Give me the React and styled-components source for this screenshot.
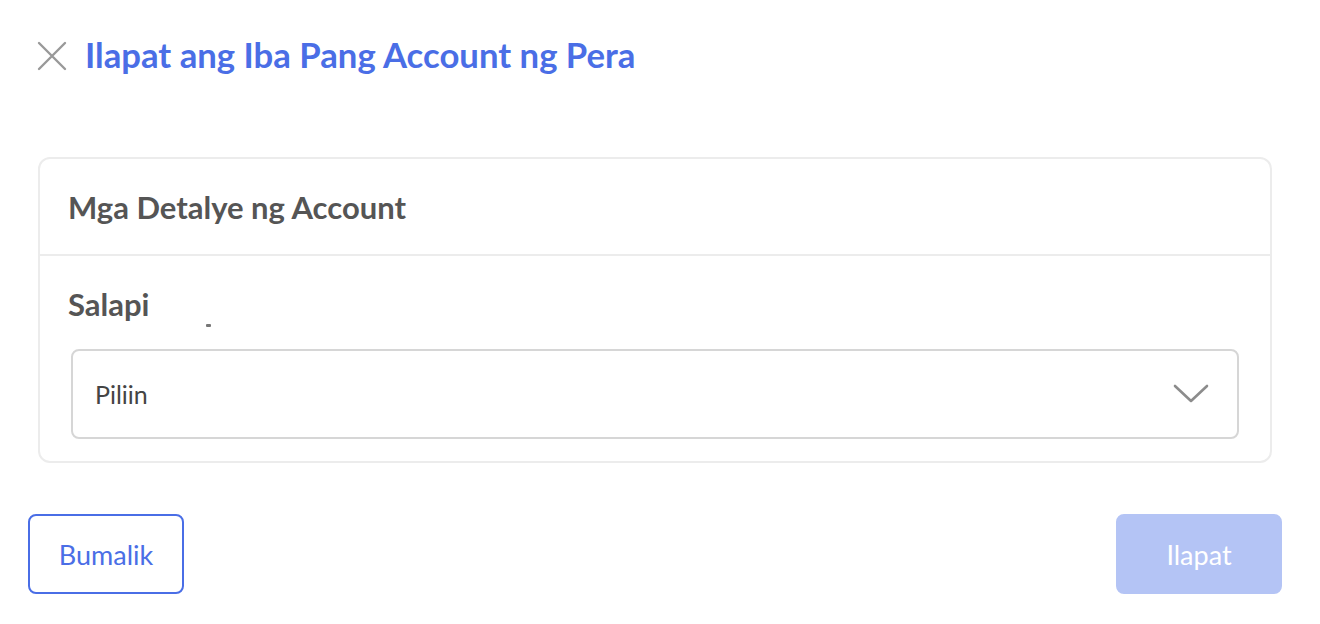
import React from 'react'
import styled, { createGlobalStyle } from 'styled-components'

const GlobalStyle = createGlobalStyle`
    body {
        margin: 0;
        background: #ffffff;
        font-family: "Lato", "Open Sans", sans-serif;
    }
`

const App = () => {
    return (
        <>
            <GlobalStyle />
            <Page>
                <TitleRow>
                    <CloseButton aria-label="Isara">
                        <svg width="30" height="30" viewBox="0 0 30 30" fill="none">
                            <path d="M2 2L28 28M28 2L2 28" stroke="#999999" strokeWidth="2.4" strokeLinecap="round" />
                        </svg>
                    </CloseButton>
                    <Title>Ilapat ang Iba Pang Account ng Pera</Title>
                </TitleRow>

                <Card>
                    <CardHeader>Mga Detalye ng Account</CardHeader>
                    <CardBody>
                        <Label>Salapi<Tick /></Label>
                        <Select>
                            <Placeholder>Piliin</Placeholder>
                            <svg width="38" height="22" viewBox="0 0 38 22" fill="none">
                                <path d="M3 3L19 18L35 3" stroke="#8c8c8c" strokeWidth="2.6" strokeLinecap="round" strokeLinejoin="round" />
                            </svg>
                        </Select>
                    </CardBody>
                </Card>

                <Actions>
                    <Button>Bumalik</Button>
                    <Button primary disabled>Ilapat</Button>
                </Actions>
            </Page>
        </>
    )
}

export default App

const Page = styled.div`
    width: 1254px;
    padding: 38px 0 0 28px;
    box-sizing: content-box;
`
const TitleRow = styled.div`
    display: flex;
    align-items: center;
    gap: 18px;
    padding-left: 9px;
    height: 34px;
`
const CloseButton = styled.button`
    border: none;
    background: none;
    padding: 0;
    width: 30px;
    height: 30px;
    display: flex;
    cursor: pointer;
    margin-top: 2px;
`
const Title = styled.h1`
    margin: 0;
    font-size: 34.7px;
    font-weight: 700;
    color: #4a6ee6;
    line-height: 1;
`
const Card = styled.div`
    margin: 85px 10px 0;
    border: 2px solid #ececec;
    border-radius: 12px;
`
const CardHeader = styled.h2`
    margin: 0;
    height: 95px;
    padding: 0 28px;
    display: flex;
    align-items: center;
    font-size: 31px;
    font-weight: 700;
    color: #555555;
    border-bottom: 2px solid #ececec;
`
const CardBody = styled.div`
    padding: 30px 31px 22px 28px;
`
const Label = styled.div`
    position: relative;
    font-size: 31px;
    font-weight: 700;
    color: #555555;
    line-height: 36px;
`
const Tick = styled.span`
    position: absolute;
    left: 138px;
    top: 38px;
    width: 5px;
    height: 3px;
    background: #777777;
    border-radius: 1px;
`
const Select = styled.div`
    margin: 27px 0 0 3px;
    height: 90px;
    border: 2px solid #d6d6d6;
    border-radius: 8px;
    display: flex;
    align-items: center;
    justify-content: space-between;
    padding: 0 27px 0 22px;
    box-sizing: border-box;
`
const Placeholder = styled.span`
    font-size: 25px;
    color: #444444;
`
const Actions = styled.div`
    display: flex;
    justify-content: space-between;
    margin-top: 51px;
`
const Button = styled.button`
    height: 80px;
    min-width: ${props => props.primary ? '166px' : '156px'};
    padding: 0 24px;
    border-radius: 8px;
    font-family: "Lato", "Open Sans", sans-serif;
    font-size: 27px;
    border: 2px solid ${props => props.primary ? '#b4c4f5' : '#4a6ee6'};
    background: ${props => props.primary ? '#b4c4f5' : '#ffffff'};
    color: ${props => props.primary ? '#ffffff' : '#4a6ee6'};
    cursor: pointer;
`
